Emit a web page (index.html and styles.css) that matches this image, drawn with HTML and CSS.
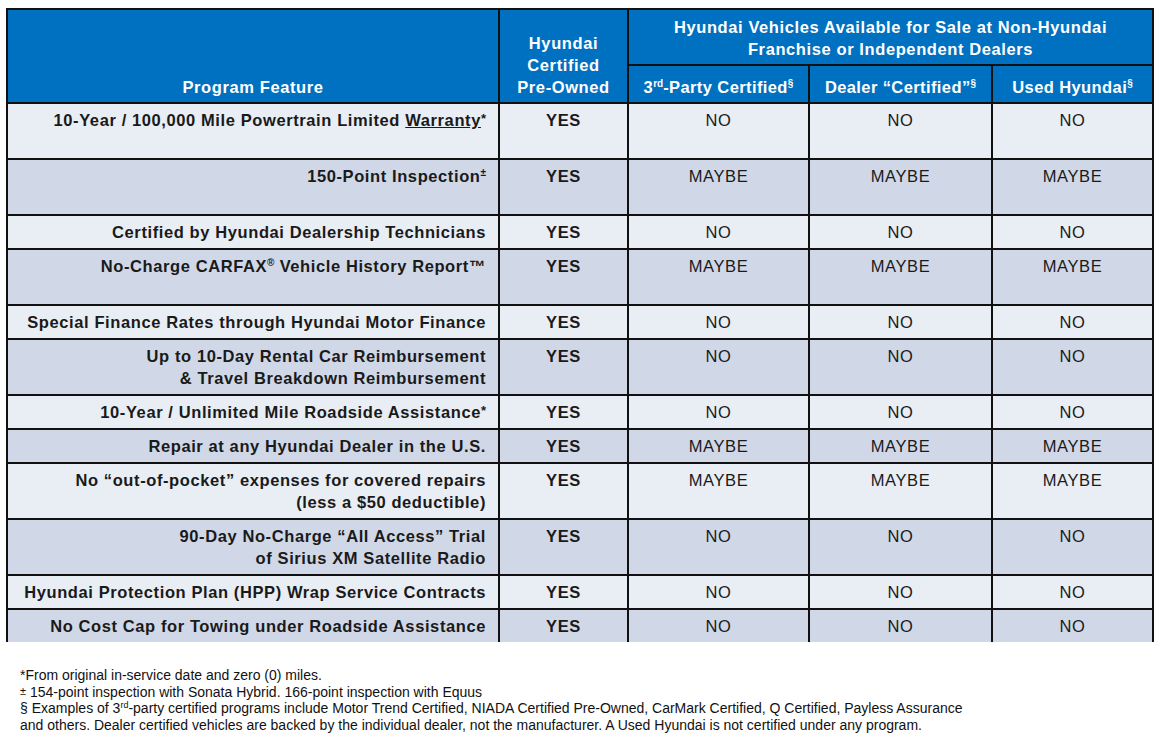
FILE: index.html
```html
<!DOCTYPE html>
<html>
<head>
<meta charset="utf-8">
<link rel="stylesheet" href="styles.css">
</head>
<body>
<div class="page">
<table class="cmp">
  <colgroup>
    <col class="c1"><col class="c2"><col class="c3"><col class="c4"><col class="c5">
  </colgroup>
  <thead>
    <tr class="h1">
      <th rowspan="2" class="feat-h">Program Feature</th>
      <th rowspan="2" class="cpo-h">Hyundai<br>Certified<br>Pre-Owned</th>
      <th colspan="3" class="grp-h">Hyundai Vehicles Available for Sale at Non-Hyundai<br>Franchise or Independent Dealers</th>
    </tr>
    <tr class="h2">
      <th>3<sup>rd</sup>-Party Certified<sup>§</sup></th>
      <th>Dealer “Certified”<sup>§</sup></th>
      <th>Used Hyundai<sup>§</sup></th>
    </tr>
  </thead>
  <tbody>
    <tr class="lt tall"><td class="f">10-Year / 100,000 Mile Powertrain Limited <u>Warranty</u><sup class="ast">*</sup></td><td class="y">YES</td><td>NO</td><td>NO</td><td>NO</td></tr>
    <tr class="dk tall"><td class="f">150-Point Inspection<sup>±</sup></td><td class="y">YES</td><td>MAYBE</td><td>MAYBE</td><td>MAYBE</td></tr>
    <tr class="lt"><td class="f">Certified by Hyundai Dealership Technicians</td><td class="y">YES</td><td>NO</td><td>NO</td><td>NO</td></tr>
    <tr class="dk tall"><td class="f">No-Charge CARFAX<sup>®</sup> Vehicle History Report™</td><td class="y">YES</td><td>MAYBE</td><td>MAYBE</td><td>MAYBE</td></tr>
    <tr class="lt"><td class="f">Special Finance Rates through Hyundai Motor Finance</td><td class="y">YES</td><td>NO</td><td>NO</td><td>NO</td></tr>
    <tr class="dk"><td class="f">Up to 10-Day Rental Car Reimbursement<br>&amp; Travel Breakdown Reimbursement</td><td class="y">YES</td><td>NO</td><td>NO</td><td>NO</td></tr>
    <tr class="lt"><td class="f">10-Year / Unlimited Mile Roadside Assistance<sup class="ast">*</sup></td><td class="y">YES</td><td>NO</td><td>NO</td><td>NO</td></tr>
    <tr class="dk"><td class="f">Repair at any Hyundai Dealer in the U.S.</td><td class="y">YES</td><td>MAYBE</td><td>MAYBE</td><td>MAYBE</td></tr>
    <tr class="lt"><td class="f">No “out-of-pocket” expenses for covered repairs<br>(less a $50 deductible)</td><td class="y">YES</td><td>MAYBE</td><td>MAYBE</td><td>MAYBE</td></tr>
    <tr class="dk"><td class="f">90-Day No-Charge “All Access” Trial<br>of Sirius XM Satellite Radio</td><td class="y">YES</td><td>NO</td><td>NO</td><td>NO</td></tr>
    <tr class="lt"><td class="f">Hyundai Protection Plan (HPP) Wrap Service Contracts</td><td class="y">YES</td><td>NO</td><td>NO</td><td>NO</td></tr>
    <tr class="dk last"><td class="f">No Cost Cap for Towing under Roadside Assistance</td><td class="y">YES</td><td>NO</td><td>NO</td><td>NO</td></tr>
  </tbody>
</table>
<div class="notes">
  <p>*From original in-service date and zero (0) miles.</p>
  <p><span class="pm">±</span> 154-point inspection with Sonata Hybrid. 166-point inspection with Equus</p>
  <p>§ Examples of 3<sup>rd</sup>-party certified programs include Motor Trend Certified, NIADA Certified Pre-Owned, CarMark Certified, Q Certified, Payless Assurance</p>
  <p>and others. Dealer certified vehicles are backed by the individual dealer, not the manufacturer. A Used Hyundai is not certified under any program.</p>
</div>
</div>
</body>
</html>
```
FILE: styles.css
```css
html, body {
  margin: 0;
  padding: 0;
  background: #ffffff;
}
body {
  font-family: "Liberation Sans", Arial, sans-serif;
  color: #1a1a1a;
}
.page {
  padding: 8px 0 0 6px;
}
.cmp {
  border-collapse: collapse;
  table-layout: fixed;
  width: 1146px;
  font-size: 16.5px;
  letter-spacing: 0.6px;
}
.c1 { width: 492px; }
.c2 { width: 129px; }
.c3 { width: 181px; }
.c4 { width: 183px; }
.c5 { width: 161px; }
.cmp th, .cmp td {
  border: 2px solid #111;
  padding: 0;
}
.cmp th {
  background: #0070c0;
  color: #ffffff;
  font-weight: bold;
  text-align: center;
  line-height: 22px;
}
.h1 { height: 56px; }
.h2 { height: 38px; }
.feat-h, .cpo-h {
  vertical-align: bottom;
  padding-bottom: 4px !important;
}
.grp-h {
  vertical-align: top;
  padding-top: 6px !important;
}
.h2 th {
  vertical-align: middle;
  padding-top: 5px !important;
  letter-spacing: 0.4px;
}
.cmp sup {
  font-size: 10px;
  line-height: 0;
  vertical-align: 6px;
  letter-spacing: 0;
}
.cmp sup.ast {
  font-size: 13px;
  vertical-align: 3px;
}
.cmp td {
  vertical-align: top;
  text-align: center;
  line-height: 22px;
  padding-top: 5px;
  padding-bottom: 5px;
  height: 22px;
}
.cmp tr.tall td { height: 44px; }
.cmp td.f {
  text-align: right;
  font-weight: bold;
  padding-right: 12px;
}
.cmp td.y { font-weight: bold; }
.lt td { background: #e9edf4; }
.dk td { background: #d0d8e8; }
.cmp tr.last td { border-bottom: none; }
.notes {
  margin-top: 25px;
  padding-left: 14px;
  font-family: "Liberation Sans", Arial, sans-serif;
  font-size: 14px;
  line-height: 16.5px;
  color: #111;
}
.notes p { margin: 0; }
.notes .pm {
  font-size: 11px;
  vertical-align: 2px;
  line-height: 0;
}
.notes sup {
  font-size: 9px;
  line-height: 0;
  vertical-align: 5px;
}
```
